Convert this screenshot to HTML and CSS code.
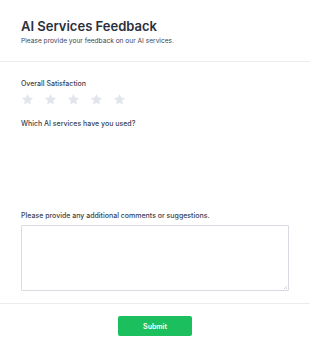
FILE: index.html
```html
<!DOCTYPE html>
<html lang="en">
<head>
    <meta charset="UTF-8">
    <meta name="viewport" content="width=device-width, initial-scale=1.0">
    <title>AI Services Feedback</title>
    <link rel="stylesheet" href="styles.css">
</head>
<body>
    <div class="header">
        <h1>AI Services Feedback</h1>
        <p class="subtitle">Please provide your feedback on our AI services.</p>
    </div>

    <div class="content">
        <div class="question">
            <p class="label">Overall Satisfaction</p>
            <div class="stars">
                <svg class="star" viewBox="0 0 24 24"><path d="M12 1.8l3.1 6.6 7.2.9-5.3 5 1.4 7.1L12 17.9l-6.4 3.5L7 14.3l-5.3-5 7.2-.9z"/></svg>
                <svg class="star" viewBox="0 0 24 24"><path d="M12 1.8l3.1 6.6 7.2.9-5.3 5 1.4 7.1L12 17.9l-6.4 3.5L7 14.3l-5.3-5 7.2-.9z"/></svg>
                <svg class="star" viewBox="0 0 24 24"><path d="M12 1.8l3.1 6.6 7.2.9-5.3 5 1.4 7.1L12 17.9l-6.4 3.5L7 14.3l-5.3-5 7.2-.9z"/></svg>
                <svg class="star" viewBox="0 0 24 24"><path d="M12 1.8l3.1 6.6 7.2.9-5.3 5 1.4 7.1L12 17.9l-6.4 3.5L7 14.3l-5.3-5 7.2-.9z"/></svg>
                <svg class="star" viewBox="0 0 24 24"><path d="M12 1.8l3.1 6.6 7.2.9-5.3 5 1.4 7.1L12 17.9l-6.4 3.5L7 14.3l-5.3-5 7.2-.9z"/></svg>
            </div>
        </div>

        <div class="question services">
            <p class="label">Which AI services have you used?</p>
            <!-- options list is empty -->
        </div>

        <div class="question">
            <p class="label">Please provide any additional comments or suggestions.</p>
            <textarea class="comments"></textarea>
        </div>
    </div>

    <div class="footer">
        <button class="submit" type="button">Submit</button>
    </div>
</body>
</html>
```

FILE: styles.css
```css
body {
    font-family: Inter, "Noto Sans", sans-serif;
    margin: 0;
    padding: 0;
    color: #2b2f3d;
    background: #fff;
}

.header {
    padding: 17px 21px 0;
    height: 44px;
    border-bottom: 1px solid #ececee;
}

.header h1 {
    font-size: 13px;
    font-weight: 600;
    line-height: 18px;
    margin: 0;
}

.subtitle {
    font-size: 6.6px;
    line-height: 9px;
    margin: 2px 0 0;
    color: #3e4353;
}

.content {
    padding: 17px 21px 0;
    height: 224px;
    border-bottom: 1px solid #ececee;
}

.question {
    margin-bottom: 13px;
}

.label {
    font-size: 7px;
    font-weight: 500;
    line-height: 9px;
    margin: 0;
    color: #3a3f4f;
}

.stars {
    display: flex;
    gap: 10px;
    margin-top: 5px;
}

.star {
    width: 13px;
    height: 13px;
    fill: #e3e5ec;
}

.services {
    height: 79px;
}

.comments {
    display: block;
    box-sizing: border-box;
    width: 100%;
    height: 66px;
    margin-top: 5px;
    border: 1px solid #d9dbe3;
    border-radius: 1px;
    font-family: inherit;
    resize: none;
    /* faint grip in the corner */
    background: linear-gradient(135deg, transparent 60%, #d4d6dc 60%, #d4d6dc 70%, transparent 70%, transparent 80%, #d4d6dc 80%) no-repeat right 1px bottom 1px / 5px 5px, #fff;
}

.footer {
    display: flex;
    justify-content: center;
    padding-top: 12px;
}

.submit {
    width: 74px;
    height: 20px;
    background: #1cbf5e;
    border: none;
    border-radius: 2px;
    color: #fff;
    font-family: inherit;
    font-size: 7px;
    font-weight: 600;
}
```
